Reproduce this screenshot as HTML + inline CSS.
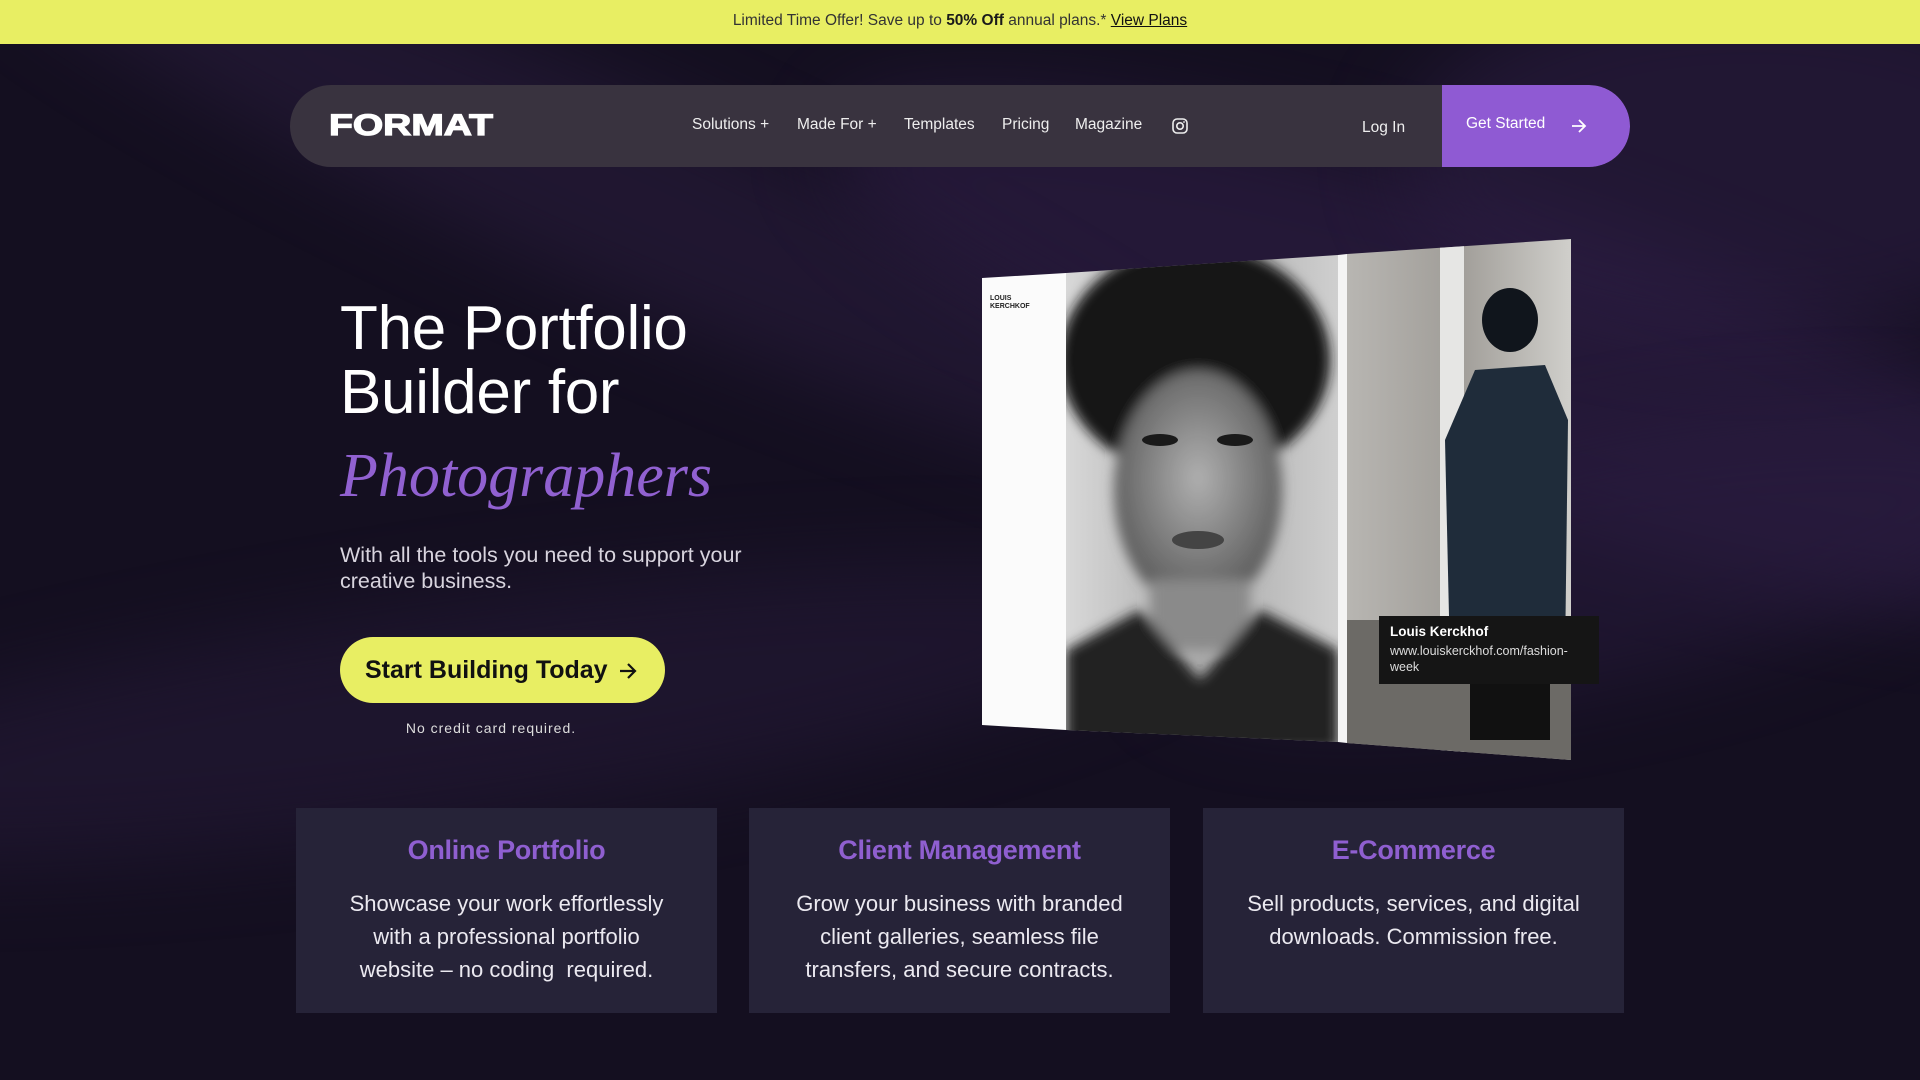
<!DOCTYPE html>
<html><head><meta charset="utf-8">
<style>
*{margin:0;padding:0;box-sizing:border-box}
html,body{width:1920px;height:1080px;overflow:hidden}
body{background:#16111f;font-family:"Liberation Sans",sans-serif;position:relative;color:#fff}
.bg{position:absolute;left:0;top:44px;width:1920px;height:1036px;overflow:hidden;background:#140f20}
.sw{position:absolute;border-radius:50%;filter:blur(40px)}
.banner{position:absolute;top:0;left:0;width:1920px;height:44px;background:#e8ee63;color:#333;font-size:15.5px;text-align:center;line-height:42px}
.banner b{color:#1a1a1a}
.banner u{color:#111}
.nav{position:absolute;left:290px;top:85px;width:1340px;height:82px;border-radius:41px;background:#39333f;overflow:hidden}
.logo{position:absolute;left:39px;top:27px;font-size:30px;font-weight:900;color:#fff;font-family:"Liberation Sans",sans-serif;transform:scaleX(1.3);transform-origin:left;line-height:28px;-webkit-text-stroke:1.2px #fff}
.nl{position:absolute;top:31px;font-size:15.5px;color:#eee}
.gs{position:absolute;right:0;top:0;width:188px;height:82px;background:#8f5ad3;border-radius:0 41px 41px 0}
.gs span{position:absolute;left:24px;top:30px;font-size:15.5px;color:#fff}
h1{position:absolute;left:340px;top:297px;font-size:62px;font-weight:400;line-height:64px;color:#fff;letter-spacing:-0.3px}
.ph{position:absolute;left:340px;top:436px;font-family:"Liberation Serif",serif;font-style:italic;font-size:62px;color:#9161d1;line-height:80px}
.sub{position:absolute;left:340px;top:542px;font-size:21.5px;line-height:26px;color:#d8d4de}
.btn{position:absolute;left:340px;top:637px;width:325px;height:66px;border-radius:33px;background:#e8ee63;color:#111;font-weight:700;font-size:25px;line-height:66px;padding-left:25px}
.ncc{position:absolute;left:340px;width:302px;top:720px;text-align:center;font-size:14px;letter-spacing:1px;color:#ddd}
.card{position:absolute;top:808px;width:421px;height:205px;background:#262338;text-align:center}
.card h3{font-size:27px;font-weight:700;color:#8f5fd0;margin-top:27px;letter-spacing:-0.3px}
.card p{font-size:22px;line-height:33px;color:#ebe9f0;margin-top:21px}
</style></head><body>
<div class="bg">
 <div class="sw" style="left:-100px;top:40px;width:1400px;height:200px;background:#2a1d3e;transform:rotate(24deg);opacity:.55"></div>
 <div class="sw" style="left:800px;top:160px;width:1400px;height:300px;background:#34214e;transform:rotate(18deg);opacity:.5"></div>
 <div class="sw" style="left:1400px;top:-60px;width:700px;height:350px;background:#2f1f47;opacity:.5"></div>
 <div class="sw" style="left:-300px;top:560px;width:1500px;height:220px;background:#241936;transform:rotate(-8deg);opacity:.6"></div>
 <div class="sw" style="left:1150px;top:400px;width:900px;height:240px;background:#2a1c40;transform:rotate(-12deg);opacity:.5"></div>
</div>
<div class="banner">Limited Time Offer! Save up to <b>50% Off</b> annual plans.* <u>View Plans</u></div>
<div class="nav">
 <div class="logo">FORMAT</div>
 <div class="nl" style="left:402px">Solutions +</div>
 <div class="nl" style="left:507px">Made For +</div>
 <div class="nl" style="left:614px">Templates</div>
 <div class="nl" style="left:712px">Pricing</div>
 <div class="nl" style="left:785px">Magazine</div>
 <svg style="position:absolute;left:881px;top:32px" width="18" height="18" viewBox="0 0 18 18"><rect x="2" y="2" width="14" height="14" rx="4" fill="none" stroke="#eee" stroke-width="1.6"/><circle cx="9" cy="9" r="3.2" fill="none" stroke="#eee" stroke-width="1.6"/><circle cx="13" cy="5" r="0.9" fill="#eee"/></svg>
 <div class="nl" style="left:1072px;top:34px">Log In</div>
 <div class="gs"><span>Get Started</span>
 <svg style="position:absolute;left:128px;top:32px" width="18" height="18" viewBox="0 0 18 18"><path d="M2 9h13M9 3l6 6-6 6" fill="none" stroke="#fff" stroke-width="1.8"/></svg></div>
</div>
<h1>The Portfolio<br>Builder for</h1>
<div class="ph">Photographers</div>
<div class="sub">With all the tools you need to support your<br>creative business.</div>
<div class="btn">Start Building Today
 <svg style="position:absolute;left:278px;top:24px" width="20" height="20" viewBox="0 0 20 20"><path d="M2 10h15M10 3l7 7-7 7" fill="none" stroke="#111" stroke-width="2.2"/></svg></div>
<div class="ncc">No credit card required.</div>

<svg style="position:absolute;left:0;top:0" width="1920" height="1080" viewBox="0 0 1920 1080">
 <defs>
  <linearGradient id="lp" x1="0" y1="0" x2="1" y2="0"><stop offset="0" stop-color="#d8d8d8"/><stop offset=".5" stop-color="#aaa"/><stop offset="1" stop-color="#cfcfcf"/></linearGradient>
  <linearGradient id="rp" x1="0" y1="0" x2="1" y2="0"><stop offset="0" stop-color="#b8b6b2"/><stop offset=".5" stop-color="#a09d98"/><stop offset="1" stop-color="#d0cfcb"/></linearGradient>
  <radialGradient id="face" cx=".5" cy=".45" r=".55"><stop offset="0" stop-color="#b0b0b0"/><stop offset="1" stop-color="#5a5a5a"/></radialGradient>
  <clipPath id="lc"><polygon points="1066,273 1338,255 1338,742 1066,730"/></clipPath>
  <clipPath id="rc"><polygon points="1347,254 1571,239 1571,760 1347,743"/></clipPath>
  <filter id="bl"><feGaussianBlur stdDeviation="6"/></filter>
 </defs>
 <polygon points="982,278 1066,273 1066,730 982,725" fill="#fbfbfb"/>
 <polygon points="1338,255 1347,254 1347,743 1338,742" fill="#f4f4f4"/>
 <g clip-path="url(#lc)">
  <rect x="1066" y="250" width="272" height="500" fill="url(#lp)"/>
  <g filter="url(#bl)">
  <ellipse cx="1195" cy="360" rx="135" ry="115" fill="#141414"/>
  <ellipse cx="1198" cy="490" rx="84" ry="120" fill="url(#face)"/>
  <rect x="1150" y="580" width="100" height="70" fill="#8a8a8a"/>
  <path d="M1066 650 L1140 610 L1200 680 L1260 610 L1338 650 L1338 750 L1066 750Z" fill="#222"/>
  </g>
  <ellipse cx="1160" cy="440" rx="18" ry="6" fill="#1a1a1a"/>
  <ellipse cx="1235" cy="440" rx="18" ry="6" fill="#1a1a1a"/>
  <ellipse cx="1198" cy="540" rx="26" ry="9" fill="#444"/>
 </g>
 <g clip-path="url(#rc)">
  <rect x="1347" y="235" width="224" height="530" fill="url(#rp)"/>
  <rect x="1440" y="235" width="24" height="530" fill="#e6e6e4"/>
  <rect x="1347" y="620" width="224" height="140" fill="#6c6a66"/>
  <ellipse cx="1510" cy="320" rx="28" ry="32" fill="#10151c"/>
  <path d="M1475 370 L1545 365 L1568 420 L1565 660 L1450 660 L1445 440Z" fill="#1f2c3a"/>
  <rect x="1470" y="650" width="80" height="90" fill="#111"/>
 </g>
 <rect x="1379" y="616" width="220" height="68" fill="#151515"/>
 <text x="1390" y="636" font-family="Liberation Sans" font-weight="700" font-size="13.5" fill="#fff">Louis Kerckhof</text>
 <text x="1390" y="655" font-family="Liberation Sans" font-size="12.5" fill="#ddd">www.louiskerckhof.com/fashion-</text>
 <text x="1390" y="671" font-family="Liberation Sans" font-size="12.5" fill="#ddd">week</text>
 <text x="990" y="300" font-family="Liberation Sans" font-weight="700" font-size="7" fill="#222">LOUIS</text>
 <text x="990" y="308" font-family="Liberation Sans" font-weight="700" font-size="7" fill="#222">KERCHKOF</text>
</svg>

<div class="card" style="left:296px"><h3>Online Portfolio</h3><p>Showcase your work effortlessly<br>with a professional portfolio<br>website – no coding&nbsp; required.</p></div>
<div class="card" style="left:749px"><h3>Client Management</h3><p>Grow your business with branded<br>client galleries, seamless file<br>transfers, and secure contracts.</p></div>
<div class="card" style="left:1203px"><h3>E-Commerce</h3><p>Sell products, services, and digital<br>downloads. Commission free.</p></div>
</body></html>
